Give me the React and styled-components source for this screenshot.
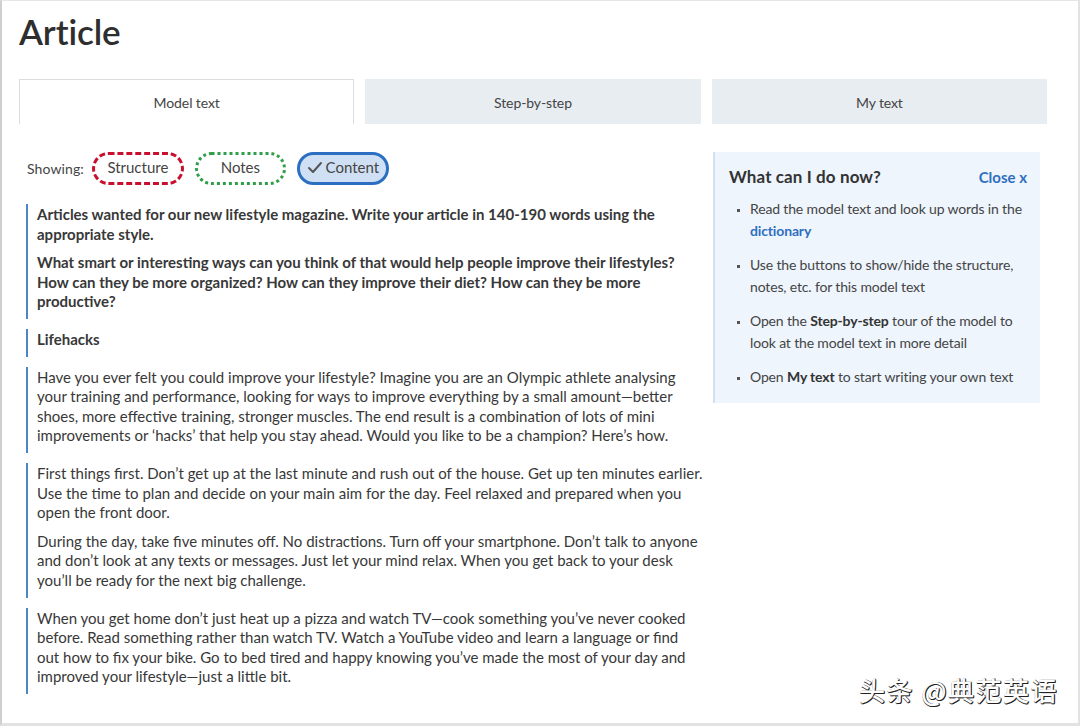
import React from "react";
import styled, { createGlobalStyle } from "styled-components";

const Global = createGlobalStyle`
  html, body {
    margin: 0;
    padding: 0;
    background: #fff;
  }
  body {
    font-family: "Lato", "Noto Sans", sans-serif;
    color: #333;
  }
`;

const Frame = styled.div`
  position: relative;
  box-sizing: border-box;
  width: 1080px;
  height: 726px;
  overflow: hidden;
  border-left: 2px solid #cfcfcf;
  border-right: 2px solid #e2e2e2;
  border-top: 1px solid #e6e6e6;
  border-bottom: 3px solid #e2e2e2;
  padding: 0 31px 0 17px;
`;

const Title = styled.h1`
  margin: 10px 0 0;
  font-size: 35px;
  font-weight: 600;
  line-height: 40px;
  color: #2e2e2e;
  letter-spacing: -0.1px;
`;

const Tabs = styled.div`
  display: grid;
  grid-template-columns: repeat(3, 1fr);
  gap: 11px;
  margin-top: 28px;
`;

const Tab = styled.div`
  box-sizing: border-box;
  height: 45px;
  display: flex;
  align-items: center;
  justify-content: center;
  font-size: 14px;
  color: #444;
  letter-spacing: -0.1px;
  background: ${({ active }) => (active ? "#fff" : "#e8edf2")};
  border: 1px solid ${({ active }) => (active ? "#dcdcdc" : "#e8edf2")};
  border-bottom: none;
`;

const Body = styled.div`
  display: grid;
  grid-template-columns: 670px 327px;
  gap: 17px;
  padding-left: 7px;
  margin-top: 28px;
`;

const Showing = styled.div`
  display: flex;
  align-items: center;
  gap: 11px;
  height: 33px;
  margin-bottom: 19px;
  padding-left: 1px;
`;

const ShowLabel = styled.span`
  font-size: 14px;
  color: #444;
  letter-spacing: 0.1px;
  margin-right: -3px;
`;

const pillBorder = {
  structure: "3px dashed #c8102e",
  notes: "3px dotted #2f9e48",
  content: "3px solid #2c6fc2",
};

const Pill = styled.span`
  box-sizing: border-box;
  height: 33px;
  width: ${({ w }) => w}px;
  display: inline-flex;
  align-items: center;
  justify-content: center;
  gap: 3px;
  border-radius: 17px;
  border: ${({ kind }) => pillBorder[kind]};
  background: ${({ kind }) => (kind === "content" ? "#cfe0f4" : "#fff")};
  font-size: 15px;
  line-height: 1;
  padding-bottom: 2px;
  color: #444;
  letter-spacing: 0;
`;

const Block = styled.div`
  border-left: 2px solid #4a86c8;
  padding: 1px 0 7px 9px;
  margin-bottom: 10px;
`;

const Para = styled.p`
  margin: 0 0 9px;
  font-size: 15px;
  line-height: 19.6px;
  white-space: nowrap;
  letter-spacing: 0;
  font-weight: ${({ bold }) => (bold ? 700 : 400)};
  color: #383838;
  &:last-child {
    margin-bottom: 0;
  }
`;

const Side = styled.aside`
  align-self: start;
  background: #eef5fd;
  border-left: 2px solid #cfe0f3;
  padding: 14px 13px 15px 14px;
`;

const SideHead = styled.div`
  display: flex;
  justify-content: space-between;
  align-items: center;
  margin-bottom: 11px;
`;

const SideTitle = styled.h3`
  margin: 0;
  font-size: 17px;
  font-weight: 700;
  color: #333;
  letter-spacing: 0.1px;
`;

const Close = styled.a`
  font-size: 15px;
  font-weight: 700;
  color: #2f6fbf;
  letter-spacing: 0;
`;

const List = styled.ul`
  margin: 0;
  padding: 0 0 0 21px;
  list-style: square;
`;

const Item = styled.li`
  font-size: 14px;
  line-height: 22px;
  color: #444;
  letter-spacing: -0.15px;
  margin-bottom: 12px;
  &::marker {
    font-size: 9px;
    color: #555;
  }
  &:last-child {
    margin-bottom: 0;
  }
`;

const Link = styled.span`
  color: #2f6fbf;
  font-weight: 700;
`;

const Strong = styled.b`
  font-weight: 700;
  color: #333;
`;

const Watermark = styled.div`
  position: absolute;
  right: 20px;
  bottom: 15px;
  font-family: "Noto Sans CJK SC", sans-serif;
  font-size: 26px;
  font-weight: 500;
  color: #fdfdfd;
  letter-spacing: 1.5px;
  text-shadow: 1px 1px 0 #222, 1px 0 0 #444, 0 1px 0 #444;
`;

const Check = () => (
  <svg width="16" height="14" viewBox="0 0 16 14">
    <polyline
      points="2,7 6,11 14,2"
      fill="none"
      stroke="#555"
      strokeWidth="2"
      strokeLinecap="round"
      strokeLinejoin="round"
    />
  </svg>
);

const App = () => (
  <Frame>
    <Global />
    <Title>Article</Title>
    <Tabs>
      <Tab active>Model text</Tab>
      <Tab>Step-by-step</Tab>
      <Tab>My text</Tab>
    </Tabs>
    <Body>
      <div>
        <Showing>
          <ShowLabel>Showing:</ShowLabel>
          <Pill kind="structure" w={92}>Structure</Pill>
          <Pill kind="notes" w={91}>Notes</Pill>
          <Pill kind="content" w={92}>
            <Check />
            Content
          </Pill>
        </Showing>
        <Block>
          <Para bold>
            Articles wanted for our new lifestyle magazine. Write your article in 140-190 words using the
            <br />
            appropriate style.
          </Para>
          <Para bold>
            What smart or interesting ways can you think of that would help people improve their lifestyles?
            <br />
            How can they be more organized? How can they improve their diet? How can they be more
            <br />
            productive?
          </Para>
        </Block>
        <Block>
          <Para bold>Lifehacks</Para>
        </Block>
        <Block>
          <Para>
            Have you ever felt you could improve your lifestyle? Imagine you are an Olympic athlete analysing
            <br />
            your training and performance, looking for ways to improve everything by a small amount—better
            <br />
            shoes, more effective training, stronger muscles. The end result is a combination of lots of mini
            <br />
            improvements or ‘hacks’ that help you stay ahead. Would you like to be a champion? Here’s how.
          </Para>
        </Block>
        <Block>
          <Para>
            First things first. Don’t get up at the last minute and rush out of the house. Get up ten minutes earlier.
            <br />
            Use the time to plan and decide on your main aim for the day. Feel relaxed and prepared when you
            <br />
            open the front door.
          </Para>
          <Para>
            During the day, take five minutes off. No distractions. Turn off your smartphone. Don’t talk to anyone
            <br />
            and don’t look at any texts or messages. Just let your mind relax. When you get back to your desk
            <br />
            you’ll be ready for the next big challenge.
          </Para>
        </Block>
        <Block>
          <Para>
            When you get home don’t just heat up a pizza and watch TV—cook something you’ve never cooked
            <br />
            before. Read something rather than watch TV. Watch a YouTube video and learn a language or find
            <br />
            out how to fix your bike. Go to bed tired and happy knowing you’ve made the most of your day and
            <br />
            improved your lifestyle—just a little bit.
          </Para>
        </Block>
      </div>
      <Side>
        <SideHead>
          <SideTitle>What can I do now?</SideTitle>
          <Close>Close x</Close>
        </SideHead>
        <List>
          <Item>
            Read the model text and look up words in the <Link>dictionary</Link>
          </Item>
          <Item>Use the buttons to show/hide the structure, notes, etc. for this model text</Item>
          <Item>
            Open the <Strong>Step-by-step</Strong> tour of the model to look at the model text in more detail
          </Item>
          <Item>
            Open <Strong>My text</Strong> to start writing your own text
          </Item>
        </List>
      </Side>
    </Body>
    <Watermark>头条 @典范英语</Watermark>
  </Frame>
);

export default App;
